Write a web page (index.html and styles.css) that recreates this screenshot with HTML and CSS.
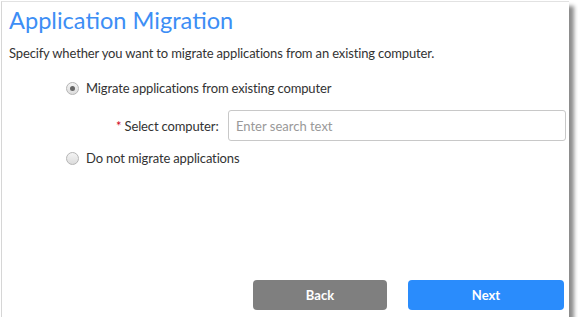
FILE: index.html
```html
<!DOCTYPE html>
<html lang="en">
<head>
  <meta charset="UTF-8">
  <title>Application Migration</title>
  <link rel="stylesheet" href="styles.css">
</head>
<body>
  <div class="panel">
    <h2 class="title">Application Migration</h2>
    <p class="intro">Specify whether you want to migrate applications from an existing computer.</p>

    <div class="options">
      <label class="option">
        <input type="radio" name="migrate" checked>
        <span class="radio"></span>
        Migrate applications from existing computer
      </label>

      <div class="field">
        <label class="field-label" for="computer"><span class="req">*</span> Select computer:</label>
        <input type="text" id="computer" class="search" placeholder="Enter search text">
      </div>

      <label class="option">
        <input type="radio" name="migrate">
        <span class="radio"></span>
        Do not migrate applications
      </label>
    </div>

    <div class="actions">
      <button class="btn btn-back">Back</button>
      <button class="btn btn-next">Next</button>
    </div>
  </div>
</body>
</html>
```

FILE: styles.css
```css
body {
  margin: 0;
  background: #fff;
  font-family: Lato, "Open Sans", sans-serif;
  color: #333;
}
.panel {
  margin: 1px 0 0 1px;
  width: 568px;
  height: 316px;
  background: #fff;
  border-top: 1px solid #e2e2e2;
  border-left: 1px solid #d6d6d6;
  box-shadow: 5px 5px 4px rgba(0,0,0,0.45);
  padding: 0 7px;
  box-sizing: border-box;
  display: flex;
  flex-direction: column;
}
.title {
  margin: 4px 0 0;
  font-size: 23.6px;
  font-weight: normal;
  color: #3d8ef5;
  line-height: 28px;
}
.intro {
  margin: 10px 0 0;
  font-size: 13px;
  letter-spacing: -0.14px;
  line-height: 18px;
  color: #333;
}
.options {
  margin-top: 17px;
  padding-left: 57px;
  font-size: 13px;
  letter-spacing: -0.14px;
}
.option {
  display: flex;
  align-items: center;
  gap: 7px;
  height: 18px;
}
.option input {
  display: none;
}
.radio {
  width: 11px;
  height: 11px;
  border-radius: 50%;
  border: 1px solid #b5b5b5;
  background: linear-gradient(#f4f4f4, #dcdcdc);
  display: flex;
  align-items: center;
  justify-content: center;
}
.option input:checked + .radio::after {
  content: "";
  width: 5px;
  height: 5px;
  border-radius: 50%;
  background: #666;
}
.field {
  display: flex;
  align-items: center;
  margin: 13px 0 8px;
  padding-left: 50px;
}
.field-label {
  width: 112px;
  flex: none;
}
.req {
  color: #d0021b;
}
.search {
  flex: 1;
  margin-right: -4px;
  height: 31px;
  box-sizing: border-box;
  border: 1px solid #c8c8c8;
  border-radius: 3px;
  padding: 0 7px;
  font-family: inherit;
  font-size: 13px;
}
.search::placeholder {
  color: #999;
}
.actions {
  margin-top: auto;
  margin-bottom: 7px;
  display: flex;
  justify-content: flex-end;
  gap: 21px;
}
.btn {
  height: 30px;
  border: none;
  border-radius: 4px;
  color: #fff;
  font-family: inherit;
  font-weight: bold;
  font-size: 13px;
}
.btn-back {
  width: 134px;
  background: #7f7f7f;
}
.btn-next {
  width: 156px;
  margin-right: -2px;
  background: #2a8cfc;
}
```
